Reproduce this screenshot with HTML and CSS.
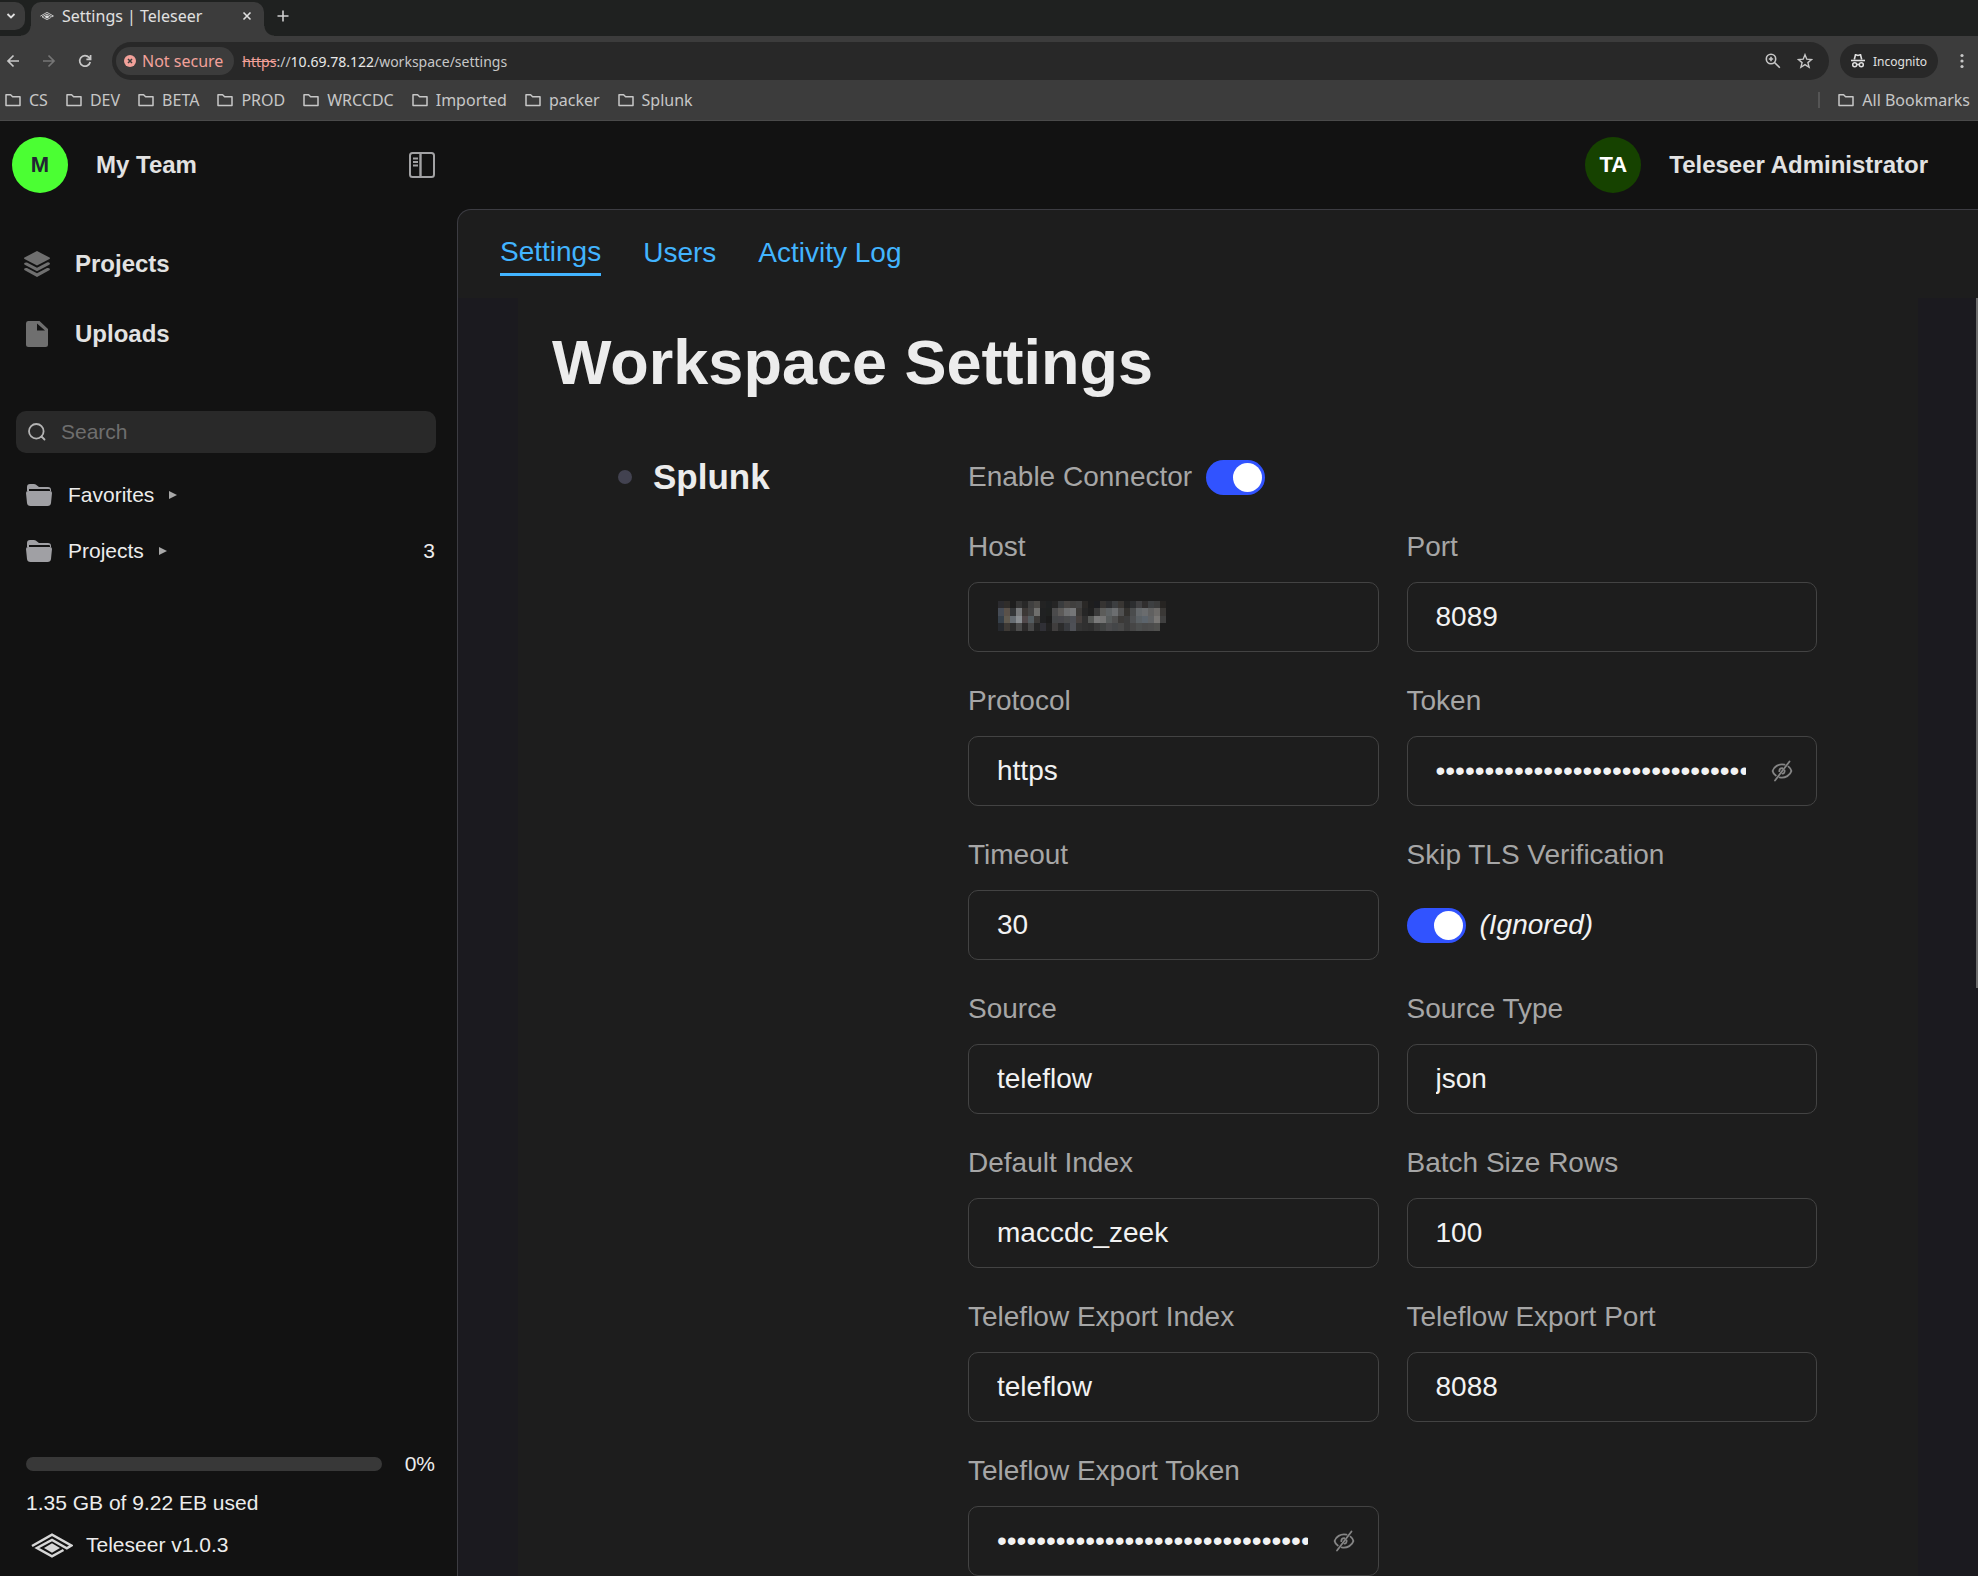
FILE: index.html
```html
<!DOCTYPE html>
<html lang="en">
<head>
<meta charset="utf-8">
<title>Settings | Teleseer</title>
<link rel="stylesheet" href="styles.css">
</head>
<body>
<svg class="defs" aria-hidden="true">
  <symbol id="bookmark-folder" viewBox="0 0 16 16"><path d="M1 2.7h4.6l2 2H15v8.8H1z" fill="none" stroke="currentColor" stroke-width="1.5" stroke-linejoin="round"/></symbol>
  <symbol id="folder" viewBox="0 0 26 22"><path d="M1 7V3q0-3 3-3h4q2 0 3 1.500L13 3h9q3 0 3 3v1h-1V6q0-1-1-1H3v2z" fill="currentColor"/><path d="M0 9q0-2 2-2h22q2 0 2 2l-1 10q-.3 3-3.500 3H4.500Q1.300 22 1 19z" fill="currentColor"/></symbol>
  <symbol id="logo" viewBox="0 0 42 25"><path d="M1 13 21 1.700 40.300 12.500 35.800 15.300 21 7 6 15 21 23.300 32.500 17" fill="none" stroke="currentColor" stroke-width="2.500"/><path d="M21 10.200 29 15l-8 4.800L13 15z" fill="currentColor"/></symbol>
  <symbol id="eye-off" viewBox="0 0 24 24"><g fill="none" stroke="currentColor" stroke-width="1.800" stroke-linecap="round"><path d="M14.500 5.700C8.500 4.400 3.600 8 2.600 12c.4 1.800 1.500 3.400 3.200 4.600M18.500 7.600c1.600 1.200 2.600 2.800 2.900 4.400-1 4-6 7.500-11.800 6.300"/><path d="M5 21.500 19.500 2.500"/><path d="M12.300 9.200c-1.700 0-3 1.300-3 3M14.600 11.500c.3 1.800-.7 3-2.200 3.200"/></g></symbol>
</svg>

<header class="browser">
  <div class="tab-strip">
    <button class="tab-search" aria-label="Search tabs"><svg width="12" height="12" viewBox="0 0 12 12"><path d="m2.500 4 3.500 3.500L9.500 4" fill="none" stroke="currentColor" stroke-width="1.800"/></svg></button>
    <div class="tab">
      <svg class="favicon" width="14" height="10"><use href="#logo"/></svg>
      <span class="tab-title">Settings | Teleseer</span>
      <button class="bare" aria-label="Close tab"><svg width="10" height="10" viewBox="0 0 10 10"><path d="m1.500 1.500 7 7m0-7-7 7" stroke="currentColor" stroke-width="1.600"/></svg></button>
    </div>
    <button class="bare new-tab" aria-label="New tab"><svg width="12" height="12" viewBox="0 0 12 12"><path d="M6 0.500v11M.5 6h11" stroke="currentColor" stroke-width="1.600"/></svg></button>
  </div>
  <div class="toolbar">
    <div class="nav-buttons">
      <button class="bare" aria-label="Back"><svg width="14" height="14" viewBox="0 0 14 14"><path d="M13 7H2m5.500-5.500L2 7l5.500 5.500" fill="none" stroke="currentColor" stroke-width="1.700"/></svg></button>
      <button class="bare dim" aria-label="Forward"><svg width="14" height="14" viewBox="0 0 14 14"><path d="M1 7h11M6.500 1.500 12 7l-5.500 5.500" fill="none" stroke="currentColor" stroke-width="1.700"/></svg></button>
      <button class="bare" aria-label="Reload"><svg width="14" height="14" viewBox="0 0 14 14"><path d="M12.200 8A5.300 5.300 0 1 1 11 3.400l1.200 1.400M12.600 1v4.300H8.400" fill="none" stroke="currentColor" stroke-width="1.700"/></svg></button>
    </div>
    <div class="omnibox">
      <button class="not-secure"><svg width="12" height="12" viewBox="0 0 12 12"><circle cx="6" cy="6" r="6" fill="#f2a19a"/><path d="m4 4 4 4m0-4L4 8" stroke="#3c3c3c" stroke-width="1.500"/></svg>Not secure</button>
      <span class="url"><s>https</s>://<b>10.69.78.122</b>/workspace/settings</span>
      <button class="bare" aria-label="Zoom"><svg width="16" height="16" viewBox="0 0 16 16"><g fill="none" stroke="currentColor" stroke-width="1.600"><circle cx="6" cy="6" r="4.700"/><path d="m9.500 9.500 5.300 5.300M6 3.800v4.400M3.800 6h4.400"/></g></svg></button>
      <button class="bare" aria-label="Bookmark this tab"><svg width="16" height="16" viewBox="0 0 16 16"><path d="m8 1.700 1.800 4.500 4.700.3-3.600 3.100 1.200 4.700L8 11.700l-4.100 2.600 1.200-4.700L1.500 6.500l4.700-.3z" fill="none" stroke="currentColor" stroke-width="1.400"/></svg></button>
    </div>
    <button class="incognito"><svg width="14" height="14" viewBox="0 0 14 14"><path d="M3.300 5.500 4.500.7 7 1.500l2.500-.8 1.200 4.800" fill="none" stroke="currentColor" stroke-width="1.600"/><path d="M0 6.500h14" stroke="currentColor" stroke-width="1.600"/><g fill="none" stroke="currentColor" stroke-width="1.500"><circle cx="3.700" cy="10.800" r="2"/><circle cx="10.300" cy="10.800" r="2"/><path d="M5.700 10.500h2.600"/></g></svg>Incognito</button>
    <button class="bare menu" aria-label="Menu"><svg width="4" height="16" viewBox="0 0 4 16"><g fill="currentColor"><circle cx="2" cy="2.500" r="1.600"/><circle cx="2" cy="8" r="1.600"/><circle cx="2" cy="13.500" r="1.600"/></g></svg></button>
  </div>
  <nav class="bookmarks" aria-label="Bookmarks">
    <button><svg><use href="#bookmark-folder"/></svg>CS</button>
    <button><svg><use href="#bookmark-folder"/></svg>DEV</button>
    <button><svg><use href="#bookmark-folder"/></svg>BETA</button>
    <button><svg><use href="#bookmark-folder"/></svg>PROD</button>
    <button><svg><use href="#bookmark-folder"/></svg>WRCCDC</button>
    <button><svg><use href="#bookmark-folder"/></svg>Imported</button>
    <button><svg><use href="#bookmark-folder"/></svg>packer</button>
    <button><svg><use href="#bookmark-folder"/></svg>Splunk</button>
    <span class="divider"></span>
    <button><svg><use href="#bookmark-folder"/></svg>All Bookmarks</button>
  </nav>
</header>

<div class="app">
  <aside class="sidebar">
    <div class="team">
      <span class="avatar avatar-team">M</span>
      <span class="name">My Team</span>
      <button class="bare collapse" aria-label="Collapse sidebar"><svg width="26" height="26" viewBox="0 0 26 26"><g fill="none" stroke="currentColor" stroke-width="2"><rect x="1" y="1" width="24" height="24" rx="2.500"/><path d="M11.500 1v24" stroke-width="2.400"/><path d="M4 6.500h5M4 10h5M4 13.500h5"/></g></svg></button>
    </div>
    <nav class="main-nav">
      <a href="#projects"><svg width="26" height="26" viewBox="0 0 26 26"><g fill="currentColor"><path d="M13 0 25.500 6.500q1 .7 0 1.400L13 14.500.5 7.900q-1-.7 0-1.400z"/><path d="M0 12.500q1-1.500 3-1l10 5.300 10-5.300q2-.5 3 1-.2 1-1.200 1.500L13 20.300 1.200 14Q.2 13.500 0 12.500z"/><path d="M0 18q1-1.500 3-1l10 5.300L23 17q2-.5 3 1-.2 1-1.200 1.500L13 26 1.200 19.500Q.2 19 0 18z"/></g></svg>Projects</a>
      <a href="#uploads"><svg width="26" height="26" viewBox="0 0 26 26"><path fill-rule="evenodd" d="M4 0h11.500L24 8v15.500q0 2.500-2.500 2.500h-17Q2 26 2 23.500V2.500Q2 0 4 0zm9 2.500V9.500h8z" fill="currentColor"/></svg>Uploads</a>
    </nav>
    <label class="search">
      <svg width="18" height="18" viewBox="0 0 18 18"><g fill="none" stroke="currentColor" stroke-width="1.800" stroke-linecap="round"><circle cx="8.300" cy="8.300" r="7.300"/><path d="m13.500 13.500 3 3"/></g></svg>
      <input type="search" placeholder="Search" aria-label="Search">
    </label>
    <div class="tree">
      <button><svg class="folder"><use href="#folder"/></svg>Favorites<i class="caret"></i></button>
      <button><svg class="folder"><use href="#folder"/></svg>Projects<i class="caret"></i><span class="count">3</span></button>
    </div>
    <footer class="usage">
      <div class="usage-row"><span class="bar" role="progressbar" aria-label="Storage used" aria-valuenow="0"></span>0%</div>
      <div class="usage-text">1.35 GB of 9.22 EB used</div>
      <div class="version"><svg width="42" height="25"><use href="#logo"/></svg>Teleseer v1.0.3</div>
    </footer>
  </aside>

  <div class="user">
    <span class="avatar avatar-user">TA</span>
    <span class="name">Teleseer Administrator</span>
  </div>

  <main class="panel">
    <nav class="tabs">
      <a href="#settings" class="active" aria-current="page">Settings</a>
      <a href="#users">Users</a>
      <a href="#activity">Activity Log</a>
    </nav>
    <div class="scroller">
      <div class="content">
        <h1>Workspace Settings</h1>
        <section class="connector">
          <h2><span class="status"></span>Splunk</h2>
          <form class="fields">
            <label class="enable">Enable Connector <input type="checkbox" class="switch" checked></label>
            <div class="field"><label for="host">Host</label><div class="box"><input id="host" type="text"><svg id="redaction" class="redaction" width="168" height="30"></svg></div></div>
            <div class="field"><label for="port">Port</label><div class="box"><input id="port" type="text" value="8089"></div></div>
            <div class="field"><label for="protocol">Protocol</label><div class="box"><input id="protocol" type="text" value="https"></div></div>
            <div class="field"><label for="token">Token</label><div class="box secret"><input id="token" type="password" value="000000000000000000000000000000000000"><button type="button" class="bare" aria-label="Show token"><svg width="24" height="24"><use href="#eye-off"/></svg></button></div></div>
            <div class="field"><label for="timeout">Timeout</label><div class="box"><input id="timeout" type="text" value="30"></div></div>
            <div class="field"><label for="tls">Skip TLS Verification</label><div class="toggle-row"><input id="tls" type="checkbox" class="switch" checked><em>(Ignored)</em></div></div>
            <div class="field"><label for="source">Source</label><div class="box"><input id="source" type="text" value="teleflow"></div></div>
            <div class="field"><label for="source-type">Source Type</label><div class="box"><input id="source-type" type="text" value="json"></div></div>
            <div class="field"><label for="index">Default Index</label><div class="box"><input id="index" type="text" value="maccdc_zeek"></div></div>
            <div class="field"><label for="batch">Batch Size Rows</label><div class="box"><input id="batch" type="text" value="100"></div></div>
            <div class="field"><label for="export-index">Teleflow Export Index</label><div class="box"><input id="export-index" type="text" value="teleflow"></div></div>
            <div class="field"><label for="export-port">Teleflow Export Port</label><div class="box"><input id="export-port" type="text" value="8088"></div></div>
            <div class="field"><label for="export-token">Teleflow Export Token</label><div class="box secret"><input id="export-token" type="password" value="000000000000000000000000000000000000"><button type="button" class="bare" aria-label="Show export token"><svg width="24" height="24"><use href="#eye-off"/></svg></button></div></div>
          </form>
        </section>
      </div>
      <span class="scroll-thumb"></span>
    </div>
  </main>
</div>
<script src="script.js"></script>
</body>
</html>
```

FILE: styles.css
```css
* { box-sizing: border-box; }
body {
  margin: 0;
  height: 100vh;
  display: flex;
  flex-direction: column;
  overflow: hidden;
  background: #121212;
  color: #ececec;
  font-family: "Liberation Sans", Arial, sans-serif;
  font-size: 21px;
}
button, input { font: inherit; color: inherit; }
button { border: 0; background: none; padding: 0; }
a { text-decoration: none; color: inherit; }
svg { display: block; flex: none; }
.defs { position: absolute; width: 0; height: 0; }
.bare { display: flex; align-items: center; justify-content: center; }

/* Browser chrome */
.browser {
  flex: none;
  background: #3c3c3c;
  color: #c7c7c7;
  border-bottom: 1px solid #4a4a4a;
  font-family: "Noto Sans", sans-serif;
  font-size: 16px;
}
.tab-strip { display: flex; height: 36px; padding-top: 2px; background: #1f2120; }
.tab-search {
  width: 25px; height: 28px;
  margin-right: 6px;
  padding-left: 5px;
  border-radius: 0 10px 10px 0;
  background: #3c3c3c;
  color: #e0e0e0;
}
.tab {
  position: relative;
  display: flex;
  align-items: center;
  width: 233px;
  padding: 0 12px 6px 9px;
  border-radius: 10px 10px 0 0;
  background: #3c3c3c;
  color: #e0e0e0;
}
.tab::before, .tab::after {
  content: "";
  position: absolute;
  bottom: 0;
  width: 10px; height: 10px;
}
.tab::before { left: -10px; background: radial-gradient(circle at 0 0, transparent 9px, #3c3c3c 10px); }
.tab::after { right: -10px; background: radial-gradient(circle at 100% 0, transparent 9px, #3c3c3c 10px); }
.favicon { margin-right: 8px; }
.tab-title { flex: 1; line-height: 22px; white-space: nowrap; }
.new-tab { height: 28px; margin-left: 13px; color: #d0d0d0; }
.toolbar { display: flex; align-items: center; height: 50px; padding-right: 14px; }
.nav-buttons { display: flex; gap: 22px; padding-left: 6px; width: 112px; }
.dim { color: #757575; }
.omnibox {
  flex: 1;
  display: flex;
  align-items: center;
  gap: 16px;
  height: 38px;
  padding: 0 16px 0 4px;
  border-radius: 19px;
  background: #282828;
}
.not-secure {
  display: flex; align-items: center; gap: 6px;
  height: 28px;
  padding: 0 11px 0 8px;
  margin-right: -8px;
  border-radius: 14px;
  background: #3c3c3c;
  color: #f2a19a;
}
.url { flex: 1; font-size: 14px; }
.url s { color: #f2a19a; }
.url b { font-weight: 400; color: #e8e8e8; }
.incognito {
  display: flex; align-items: center; gap: 8px;
  height: 34px;
  margin-left: 11px;
  padding: 0 11px;
  border-radius: 17px;
  background: #282828;
  color: #e0e0e0;
  font-size: 12px;
}
.menu { margin-left: 22px; }
.bookmarks { display: flex; align-items: center; gap: 18px; height: 34px; padding: 0 8px 6px 5px; }
.bookmarks button { display: flex; align-items: center; gap: 8px; line-height: 22px; }
.bookmarks svg { width: 16px; height: 16px; }
.divider { width: 2px; height: 16px; margin-left: auto; background: #555; }

/* Application shell */
.app {
  flex: 1;
  min-height: 0;
  display: grid;
  grid-template-columns: 457px minmax(0, 1fr);
  grid-template-rows: 88px minmax(0, 1fr);
}
.sidebar { grid-row: 1 / 3; display: flex; flex-direction: column; }
.team { display: flex; align-items: center; height: 88px; padding: 0 22px 0 12px; }
.name { font-size: 24px; font-weight: 700; color: #e2e2e2; }
.team .name { margin-left: 28px; }
.avatar {
  display: grid;
  place-items: center;
  width: 56px; height: 56px;
  border-radius: 50%;
  font-size: 22px;
  font-weight: 700;
}
.avatar-team { background: #4bff33; color: #222433; }
.avatar-user { background: #164200; color: #fff; }
.collapse { margin-left: auto; color: #a2a2a4; }
.user { display: flex; align-items: center; justify-content: flex-end; gap: 28px; padding-right: 50px; }
.main-nav { display: flex; flex-direction: column; padding: 20px 24px 42px; }
.main-nav a { display: flex; align-items: center; gap: 25px; height: 70px; font-size: 24px; font-weight: 700; color: #e2e2e2; }
.main-nav svg { color: #6f6f6f; }
.search {
  display: flex; align-items: center; gap: 15px;
  height: 42px;
  margin: 0 21px 14px 16px;
  padding: 0 12px;
  border-radius: 10px;
  background: #292929;
  color: #b4b4b4;
}
.search input { flex: 1; min-width: 0; padding: 0; border: 0; outline: 0; background: none; }
.search input::placeholder { color: #6e6e6e; opacity: 1; }
.tree { display: flex; flex-direction: column; padding: 0 22px 0 26px; }
.tree button { display: flex; align-items: center; height: 56px; }
.folder { width: 26px; height: 22px; margin-right: 16px; color: #a0a0a4; }
.caret { margin-left: 15px; border: solid transparent; border-width: 4px 0 4px 8px; border-left-color: #a8a8a8; }
.count { margin-left: auto; }
.usage { margin-top: auto; padding: 0 22px 10px 26px; }
.usage-row { display: flex; align-items: center; gap: 23px; height: 36px; }
.bar { flex: 1; height: 14px; border-radius: 7px; background: #383838; }
.usage-text { line-height: 42px; }
.version { display: flex; align-items: center; gap: 13px; height: 42px; padding-left: 5px; }
.version svg { color: #d6d6d6; }

/* Settings panel */
.panel {
  display: flex;
  flex-direction: column;
  min-height: 0;
  overflow: hidden;
  border: solid #3c3c42;
  border-width: 1px 0 0 1px;
  border-radius: 14px 0 0 0;
  background: #1d1d1d;
  font-size: 28px;
}
.tabs { flex: none; display: flex; align-items: center; gap: 42px; height: 88px; padding: 0 42px 2px; color: #42b4ff; }
.tabs a { line-height: 42px; }
.tabs .active { border-bottom: 3px solid; }
.scroller { position: relative; flex: 1; min-height: 0; overflow: hidden; padding: 0 60px; background: #1b1a1f; }
.scroll-thumb { position: absolute; top: 0; right: 0; width: 2px; height: 54%; background: #6b6b6b; }
.content { max-width: 1400px; margin: 0 auto; padding: 26px 34px; background: #1d1d1d; }
h1 { margin: 0 0 56px; font-size: 63px; line-height: 76px; }
.connector { display: grid; grid-template-columns: 350px minmax(0, 1fr); padding: 0 67px 0 66px; }
h2 { display: flex; align-items: center; gap: 21px; height: 42px; margin: 0; font-size: 35px; }
.status { width: 14px; height: 14px; border-radius: 50%; background: #424250; }
.fields { display: grid; grid-template-columns: repeat(2, minmax(0, 1fr)); gap: 28px; }
.fields label { line-height: 42px; color: #a6a6a6; }
.enable { grid-column: 1 / 3; display: flex; align-items: center; gap: 14px; height: 42px; }
.field { display: flex; flex-direction: column; gap: 14px; }
.box {
  position: relative;
  display: flex;
  align-items: center;
  gap: 24px;
  height: 70px;
  padding: 0 28px;
  border: 1px solid #434343;
  border-radius: 10px;
}
.box input { flex: 1; min-width: 0; padding: 0; border: 0; outline: 0; background: none; color: #f2f2f2; }
.secret { padding-right: 22px; }
.secret button { color: #858585; }
.redaction { position: absolute; left: 29px; top: 18px; }
.toggle-row { display: flex; align-items: center; gap: 14px; height: 70px; color: #f2f2f2; }
.switch {
  appearance: none;
  display: flex;
  justify-content: flex-end;
  align-items: center;
  width: 59px; height: 35px;
  margin: 0;
  padding: 0 3px;
  border-radius: 18px;
  background: #3153ff;
}
.switch::before { content: ""; width: 29px; height: 29px; border-radius: 50%; background: #fff; }
.switch:not(:checked) { justify-content: flex-start; background: #555; }
```

FILE: script.js
```js
// Pixelated cover over the host address: four rows of colour cells.
const rows = [
  "2b2b2f 302d2a 1e1e1e 353535 282828 404040 4b4946 232323 1f2122 252525 3a3c3e 474442 403f3e 424242 2a2826 1e1e1e 1c1d20 363432 2c2d2f 3c3e40 393633 242424 2c2e30 404042 302e2e 3d3f41 3b3b3b 262422",
  "454b55 5a5149 343638 77797b 3c3836 444444 6f6f6d 202122 1f2120 4b4b4c 5c5a58 6e6f70 757678 3c3a38 262626 202020 3a3a3a 5c5c5a 5e6264 6c6e70 505050 34322f 4a4c4d 63676a 6a6c6e 606060 6c6a68 3a3836",
  "36404a 605a50 666c72 8a8e92 50484a 545c60 3c3a38 202122 1c1c1c 444648 46464a 4a4b4c 4c4e54 46403e 303030 565856 7a7a7a 747474 585c5c 505050 3c3a38 3c3c3c 4e5052 5a6064 5c646c 606264 787674 404040",
  "26292e 3e3a36 2c2c2c 4c4c4c 2c2a2a 474747 262626 303036 222222 403e3e 2c2c2c 383a3e 4e5056 343434 303030 2e2e2e 3a3a3a 404242 4a4a4c 444648 484848 3c3c3c 464646 4c4e4e 4a4a4a 4c4c4c 50504e 1d1d1d"
];
const tops = [0, 7, 15, 22, 30];
const svg = document.getElementById("redaction");
rows.forEach((row, r) => row.split(" ").forEach((color, c) => {
  const cell = document.createElementNS("http://www.w3.org/2000/svg", "rect");
  cell.setAttribute("x", c * 6);
  cell.setAttribute("y", tops[r]);
  cell.setAttribute("width", 6);
  cell.setAttribute("height", tops[r + 1] - tops[r]);
  cell.setAttribute("fill", "#" + color);
  svg.append(cell);
}));
```
